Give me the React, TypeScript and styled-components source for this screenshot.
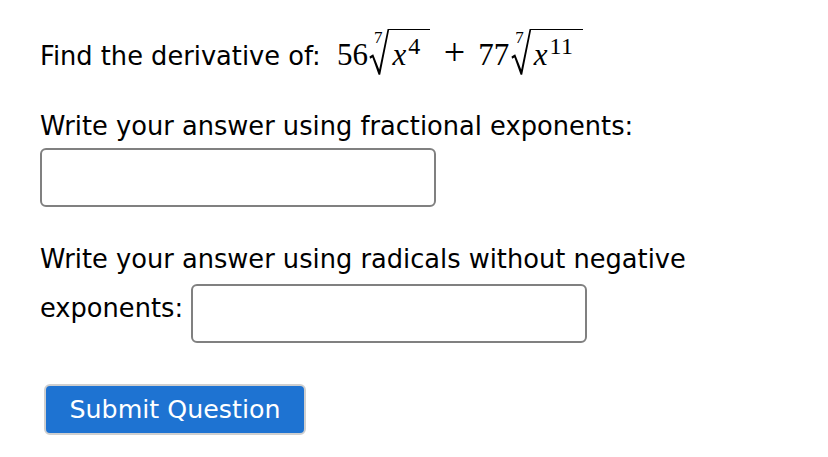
import React from "react";
import styled, { createGlobalStyle } from "styled-components";

const GlobalStyle = createGlobalStyle`
  html, body {
    margin: 0;
    padding: 0;
    background: #ffffff;
  }
  body {
    font-family: "DejaVu Sans", Verdana, sans-serif;
    color: #000000;
  }
`;

const Page = styled.main`
  padding: 29px 40px 0 40px;
  font-size: 25.7px;
  line-height: 1.2;
`;

const Prompt = styled.p<{ $gap: number }>`
  margin: ${(p) => p.$gap}px 0 0 0;
`;

const MathExpr = styled.span`
  font-family: "Liberation Serif", "DejaVu Serif", serif;
  font-size: 31px;
  line-height: 1;
  white-space: nowrap;
  margin-left: 8px;
`;

const Op = styled.span`
  font-size: 38px;
  line-height: 0;
  margin: 0 13px 0 14px;
`;

const Radical = styled.span`
  display: inline-block;
  vertical-align: -10px;
  height: 46px;
  overflow: hidden;
  margin-left: 1px;
`;

const RadicalRow = styled.span`
  display: flex;
  align-items: flex-start;
  height: 100%;
`;

const RootIndex = styled.span`
  font-size: 17px;
  line-height: 17px;
  margin: 0 -13px 0 5px;
`;

const Surd = styled.svg`
  width: 20px;
  height: 46px;
  flex: none;
  display: block;
`;

const Radicand = styled.span`
  display: block;
  white-space: nowrap;
  line-height: 41px;
  padding: 3.5px 9px 0 3px;
  border-top: 1.5px solid #000;
`;

const Var = styled.i`
  font-style: italic;
  margin-right: 2px;
`;

const Sup = styled.span`
  font-size: 24px;
  line-height: 0;
  vertical-align: 11px;
  letter-spacing: 0.5px;
`;

const AnswerBox = styled.input<{ $inline?: boolean }>`
  box-sizing: border-box;
  width: 396px;
  height: 59px;
  border: 2px solid #808080;
  border-radius: 6px;
  background: #fff;
  font-family: "DejaVu Sans", Verdana, sans-serif;
  font-size: 24px;
  padding: 0 10px;
  outline: none;
  display: ${(p) => (p.$inline ? "inline-block" : "block")};
  vertical-align: middle;
  margin: ${(p) => (p.$inline ? "9px 0 0 0" : "6px 0 0 0")};
`;

const SubmitButton = styled.button`
  box-sizing: border-box;
  display: block;
  margin: 41px 0 0 4px;
  width: 262px;
  height: 51px;
  background: #1e73d2;
  color: #ffffff;
  border: 2px solid #cfcfcf;
  border-radius: 6px;
  font-family: "DejaVu Sans", Verdana, sans-serif;
  font-size: 25.3px;
  padding: 0;
  cursor: pointer;
`;

function Root({ index, children }: { index: string; children: React.ReactNode }) {
  return (
    <Radical>
      <RadicalRow>
        <RootIndex>{index}</RootIndex>
        <Surd viewBox="0 0 20 46" aria-hidden="true">
          <path
            d="M0.5 27.5 L4.2 25.2 L10.2 40.5 L18.6 0 L20 0 L20 1.4 L11.2 45.8 L9.6 45.8 L3.4 28.6 L1.1 29.8 Z"
            fill="#000"
          />
        </Surd>
        <Radicand>{children}</Radicand>
      </RadicalRow>
    </Radical>
  );
}

export default function App() {
  return (
    <>
      <GlobalStyle />
      <Page>
        <Prompt $gap={0}>
          Find the derivative of:{" "}
          <MathExpr>
            56
            <Root index="7">
              <Var>x</Var>
              <Sup>4</Sup>
            </Root>
            <Op>+</Op>
            77
            <Root index="7">
              <Var>x</Var>
              <Sup>11</Sup>
            </Root>
          </MathExpr>
        </Prompt>
        <Prompt $gap={36}>Write your answer using fractional exponents:</Prompt>
        <AnswerBox type="text" aria-label="Answer using fractional exponents" />
        <Prompt $gap={37}>
          Write your answer using radicals without negative exponents:{" "}
          <AnswerBox $inline type="text" aria-label="Answer using radicals" />
        </Prompt>
        <SubmitButton type="button">Submit Question</SubmitButton>
      </Page>
    </>
  );
}
